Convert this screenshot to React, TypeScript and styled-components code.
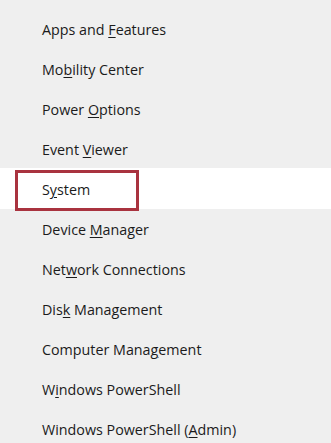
import React from "react";
import styled, { createGlobalStyle } from "styled-components";

const Global = createGlobalStyle`
  html, body { margin: 0; padding: 0; background: #efefef; }
  body { font-family: "Open Sans", "Noto Sans", sans-serif; }
`;

const Menu = styled.ul`
  list-style: none;
  margin: 0;
  padding: 8px 0 0;
  width: 331px;
  height: 443px;
  overflow: hidden;
  box-sizing: border-box;
  background: #efefef;
`;

const Item = styled.li<{ $active?: boolean }>`
  position: relative;
  height: 41px;
  margin-bottom: -1px;
  box-sizing: border-box;
  display: flex;
  align-items: center;
  padding: 2px 0 0 42px;
  font-size: 14.3px;
  color: #1b1b1b;
  background: ${(p) => (p.$active ? "#ffffff" : "transparent")};
  ${(p) =>
    p.$active &&
    `
    &::after {
      content: "";
      position: absolute;
      left: 15px;
      top: 2px;
      width: 124px;
      height: 41px;
      box-sizing: border-box;
      border: 3px solid #a9333f;
    }
  `}
`;

const Key = styled.span`
  text-decoration: underline;
  text-underline-offset: 2px;
  text-decoration-thickness: 1px;
`;

type Entry = { pre: string; key: string; post: string; active?: boolean };

const items: Entry[] = [
  { pre: "Apps and ", key: "F", post: "eatures" },
  { pre: "Mo", key: "b", post: "ility Center" },
  { pre: "Power ", key: "O", post: "ptions" },
  { pre: "Event ", key: "V", post: "iewer" },
  { pre: "S", key: "y", post: "stem", active: true },
  { pre: "Device ", key: "M", post: "anager" },
  { pre: "Net", key: "w", post: "ork Connections" },
  { pre: "Dis", key: "k", post: " Management" },
  { pre: "Computer Mana", key: "g", post: "ement" },
  { pre: "W", key: "i", post: "ndows PowerShell" },
  { pre: "Windows PowerShell (", key: "A", post: "dmin)" },
];

export default function App() {
  return (
    <>
      <Global />
      <Menu>
        {items.map((it, i) => (
          <Item key={i} $active={it.active}>
            <span>
              {it.pre}
              <Key>{it.key}</Key>
              {it.post}
            </span>
          </Item>
        ))}
      </Menu>
    </>
  );
}
